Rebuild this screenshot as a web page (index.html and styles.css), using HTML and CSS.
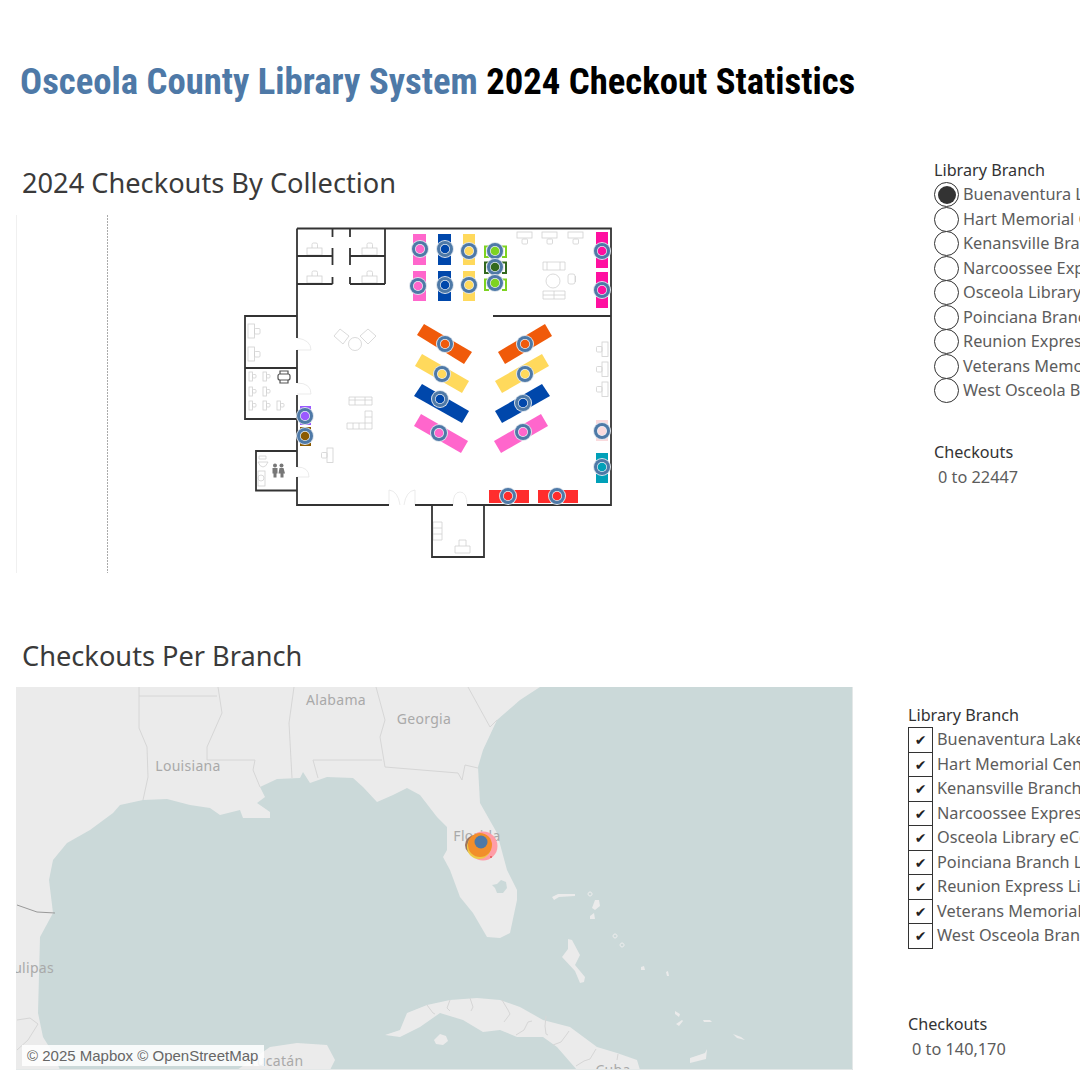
FILE: index.html
```html
<!DOCTYPE html>
<html lang="en">
<head>
  <meta charset="UTF-8" />
  <meta name="viewport" content="width=device-width, initial-scale=1.0"/>
  <title>Osceola County Library System – 2024 Checkout Statistics</title>
  <link rel="stylesheet" href="styles.css">
</head>
<body>
<h1 class="title"><span class="title-blue">Osceola County Library System</span> 2024 Checkout Statistics</h1>

<section class="row row-plan">
  <div class="main">
    <h2>2024 Checkouts By Collection</h2>
    <svg class="plan" viewBox="16 215 824 358" width="824" height="358">
      <defs>
        <g id="marker">
          <circle r="9" fill="#dde4ec"/>
          <circle r="8" fill="#4e79a7"/>
          <circle r="5" fill="#e8eef4"/>
          <circle r="4.300" fill="currentColor"/>
        </g>
        <g id="desk-up" class="furn">
          <rect x="0" y="5" width="15" height="7"/>
          <path d="M5 5V1.5Q5 0 6.5 0H9Q10.5 0 10.5 1.5V5"/>
        </g>
        <g id="desk-down" class="furn">
          <rect x="0" y="0" width="15" height="6"/>
          <rect x="5" y="7" width="5.5" height="5" rx="1"/>
        </g>
        <g id="desk-left" class="furn">
          <rect x="6" y="0" width="6" height="14.5"/>
          <rect x="0.5" y="4.5" width="5.5" height="5.5" rx="1"/>
        </g>
        <g id="desk-right" class="furn">
          <rect x="0" y="0" width="6.5" height="14"/>
          <rect x="6.5" y="4.5" width="5.5" height="5.5" rx="1"/>
        </g>
        <g id="desk-small" class="furn">
          <rect x="0" y="0" width="3.5" height="9"/>
          <rect x="3.5" y="2.5" width="3.5" height="3.5" rx="1"/>
        </g>
      </defs>

      <path class="dash" d="M107.5 215V573"/>
      <path class="frame" d="M16.5 215V573.5H840"/>

      <g class="furn">
        <path d="M543 262h22v8h-22zM547 262v8M560 262v8"/>
        <circle cx="553" cy="281" r="7"/>
        <path d="M543 291h22v8h-22zM554 291v8M543 295h22"/>
        <rect x="568" y="274" width="7" height="10" rx="2"/>
        <path d="M575.5 276v6"/>
        <path d="M334 336l6-7 9 7-6 8zM360 336l8-7 8 7-8 8z"/>
        <circle cx="355" cy="344" r="6.5"/>
        <path d="M349 397h23v8h-23zM355 397v8M365 397v8M349 400h23"/>
        <path d="M365 411h7v18h-25v-6h18zM365 417h7M365 423h7M353 423v6M359 423v6M365 423v6"/>
        <path d="M433 522h9v18h-9zM433 528h9M433 534h9"/>
        <path d="M455 546h15v7h-15zM459 546v-6h7v6"/>
        <path d="M259 459h7v-3h-7zM258 462q2 5 5 5t5-5z"/>
        <rect x="258" y="471" width="7" height="15"/>
        <circle cx="261" cy="478" r="3"/>
      </g>
      <path class="door" d="M297 338q14 2 14 12h-14M297 383q14 0 14 11h-14M297 467q12 0 12 10h-12M389 505v-15q9 1 11 15M415 505v-15q-9 1-11 15M453 505q0-13 7-13t7 13"/>
      <use href="#desk-up" x="307" y="243"/>
      <use href="#desk-up" x="362" y="243"/>
      <use href="#desk-up" x="307" y="271"/>
      <use href="#desk-up" x="362" y="271"/>
      <use href="#desk-down" x="517" y="232"/>
      <use href="#desk-down" x="542" y="232"/>
      <use href="#desk-down" x="568" y="232"/>
      <use href="#desk-left" x="596" y="342"/>
      <use href="#desk-left" x="596" y="362"/>
      <use href="#desk-left" x="596" y="382"/>
      <use href="#desk-left" x="321" y="448"/>
      <use href="#desk-right" x="248" y="324"/>
      <use href="#desk-right" x="248" y="347"/>
      <use href="#desk-small" x="249" y="372"/>
      <use href="#desk-small" x="263" y="372"/>
      <use href="#desk-small" x="249" y="387"/>
      <use href="#desk-small" x="263" y="387"/>
      <use href="#desk-small" x="249" y="401"/>
      <use href="#desk-small" x="263" y="401"/>
      <use href="#desk-small" x="277" y="401"/>

      <g class="printer">
        <rect x="278" y="374" width="12" height="6" rx="2"/>
        <path d="M280 374v-3h8v3M280 380v3h8v-3"/>
      </g>
      <g class="people">
        <circle cx="275" cy="465.500" r="2"/>
        <path d="M272.500 468h5v5.500h-1v4h-3v-4h-1z"/>
        <circle cx="281.500" cy="465.500" r="2"/>
        <path d="M279.500 468h4l1.500 5.500h-1.500v4h-3v-4h-2z"/>
      </g>

      <path class="wall" d="M297 228.500H611V505H467M453 505H415M389 505H297V477M297 467V395M297 383V350M297 338V228.500
        M332.500 228.500V237M332.500 248V265M332.500 277V284M350 228.500V237M350 248V265M350 277V284
        M385 228.500V284M297 256H332.500M350 256H385M297 284H332.500M350 284H385
        M297 316H245V419H297M245 368H297
        M297 451H256V490.500H297
        M493 316H611
        M432 505V557H484V505"/>

      <g class="pink"><rect class="shelf" x="413" y="234" width="13" height="31"/><rect class="shelf" x="413" y="271" width="13" height="30"/></g>
      <g class="blue"><rect class="shelf" x="438" y="234" width="13" height="31"/><rect class="shelf" x="438" y="271" width="13" height="30"/></g>
      <g class="yellow"><rect class="shelf" x="463" y="234" width="12" height="31"/><rect class="shelf" x="463" y="271" width="12" height="30"/></g>
      <path class="green-bracket" d="M489 246.500h-4v10.500h4M502 246.500h4v10.500h-4M489 279.500h-4v10.500h4M502 279.500h4v10.500h-4"/>
      <path class="dkgreen-bracket" d="M489 262.500h-4v10.500h4M502 262.500h4v10.500h-4"/>
      <g class="magenta"><rect class="shelf" x="596" y="232" width="12" height="36"/><rect class="shelf" x="596" y="272" width="12" height="36"/></g>

      <polygon class="shelf orange" points="424,324 472,352 464,364 417,335"/>
      <polygon class="shelf yellow" points="422,354 469,381 462,393 415,366"/>
      <polygon class="shelf blue" points="422,384 469,411 462,423 414,396"/>
      <polygon class="shelf pink" points="421,414 468,441 461,453 414,426"/>
      <polygon class="shelf orange" points="545,324 552,336 505,364 498,352"/>
      <polygon class="shelf yellow" points="542,354 549,366 502,393 495,381"/>
      <polygon class="shelf blue" points="542,384 550,396 502,423 495,411"/>
      <polygon class="shelf pink" points="541,414 548,426 501,453 494,441"/>

      <rect class="shelf pale" x="596" y="420" width="12" height="21"/>
      <rect class="shelf teal" x="596" y="453" width="12" height="30"/>
      <rect class="shelf red" x="489" y="490" width="40" height="13"/>
      <rect class="shelf red" x="538" y="490" width="40" height="13"/>
      <rect class="shelf purple" x="300" y="406" width="11" height="19"/>
      <rect class="shelf brown" x="300" y="427" width="11" height="19"/>

      <use class="pink" href="#marker" x="420" y="249"/>
      <use class="pink" href="#marker" x="418" y="286"/>
      <use class="blue" href="#marker" x="445" y="249"/>
      <use class="blue" href="#marker" x="445" y="285"/>
      <use class="yellow" href="#marker" x="469" y="251"/>
      <use class="yellow" href="#marker" x="469" y="285"/>
      <use class="green" href="#marker" x="495" y="251"/>
      <use class="dkgreen" href="#marker" x="495" y="267"/>
      <use class="green" href="#marker" x="495" y="283"/>
      <use class="magenta" href="#marker" x="602" y="251"/>
      <use class="magenta" href="#marker" x="602" y="290"/>
      <use class="orange" href="#marker" x="445" y="344"/>
      <use class="orange" href="#marker" x="525" y="344"/>
      <use class="yellow" href="#marker" x="442" y="374"/>
      <use class="yellow" href="#marker" x="525" y="374"/>
      <use class="blue" href="#marker" x="440" y="399"/>
      <use class="blue" href="#marker" x="523" y="403"/>
      <use class="pink" href="#marker" x="439" y="433"/>
      <use class="pink" href="#marker" x="523" y="432"/>
      <use class="pale" href="#marker" x="602" y="431"/>
      <use class="teal" href="#marker" x="602" y="467"/>
      <use class="red" href="#marker" x="508" y="496"/>
      <use class="red" href="#marker" x="557" y="496"/>
      <use class="purple" href="#marker" x="305" y="416"/>
      <use class="brown" href="#marker" x="305" y="436"/>
    </svg>
  </div>
  <aside class="side">
    <div class="legend-title">Library Branch</div>
    <ul class="radios">
      <li class="checked">Buenaventura Lakes Branch Library</li>
      <li>Hart Memorial Central Library</li>
      <li>Kenansville Branch Library</li>
      <li>Narcoossee Express Library</li>
      <li>Osceola Library eCollection</li>
      <li>Poinciana Branch Library</li>
      <li>Reunion Express Library</li>
      <li>Veterans Memorial Library</li>
      <li>West Osceola Branch Library</li>
    </ul>
    <div class="legend-title legend-gap">Checkouts</div>
    <div class="range">0 to 22447</div>
  </aside>
</section>

<section class="row row-map">
  <div class="main">
    <h2>Checkouts Per Branch</h2>
    <div class="map">
      <svg viewBox="16 687 837 383" width="837" height="383">
        <rect class="water" x="16" y="687" width="837" height="383"/>
        <path class="land" d="M16 687H540L520 700 497 720 483 750 478 767 480 803 497 833 507 870 517 890 517 900 510 933 500 938 487 937 473 913 460 897 450 870 443 857 447 850 447 827 437 817 420 795 407 788 393 795 377 802 363 787 353 778 327 777 310 783 303 772 300 778 277 779 260 787 265 797 257 803 270 812 270 818 243 818 240 810 220 815 210 808 190 805 167 799 143 800 120 805 113 813 90 830 67 843 53 860 49 880 53 913 40 937 38 1013 43 1037 53 1053 60 1070H16Z"/>
        <path class="water" d="M501 880l5 2 1 6-4 5-6 0-2-5-3-3 5-1z"/>
        <path class="land" d="M237 1070L270 1047 297 1043 327 1045 335 1060 330 1070Z"/>
        <path class="land" d="M385 1035L400 1030 407 1013 427 1005 450 1000 477 998 500 1000 520 1007 543 1020 570 1027 597 1047 617 1053 637 1060 640 1070H577L557 1047 543 1037 517 1037 500 1030 483 1032 463 1020 440 1013 420 1027 400 1037Z"/>
        <path class="land" d="M440 1034l6 2 2 5-5 4-7-1-2-4z"/>
        <path class="land" d="M568 939l4 1 8 15-5 10 10 12-1 5-4 1-5-12-13-14 6-8zM552 897l6-3 17 0 0 2-16 1-5 3zM592 908l3-8 4 0 1 6-5 4zM590 916l4-3 1 6-5 0zM641 967l3-1 1 4-4 0zM666 972l2-1 1 5-2 0zM675 1011l5 3-1 3-4-3zM676 1024l6-4 1 1-4 5zM703 1020l7 0 2 2-8 0zM733 1034l8 3 4 3-8-2zM690 1058l15-5 2-4-1 10-16 4z"/>
        <path class="isle" d="M615 934a2 2 0 1 0 .1 0zM622 943a2 2 0 1 0 .1 0zM590 892a2 2 0 1 0 .1 0z"/>

        <path class="border" d="M139 687V728L147 747 148 777 143 800M139 696H217M218 687L222 713 207 747 207 760H255L253 770 260 787M294 687L289 723 292 778M376 687L385 720 380 737 385 767 458 773 462 780 465 765 478 768M313 760H382M313 760L318 778M468 687L490 727 497 720"/>
        <path class="border" d="M427 1005l6 8 2 1M450 1000l-3 8 3 3M470 998l3 9-2 4M502 1000l6 10 2 4-6 8M516 1035l8-5 4-8 4-1M546 1016l-1 10 1 8 2 1M553 1045l8-3 6-8 2-3M576 1066l8-5 6-2 6-10M617 1060l1-6"/>
        <path class="border-strong" d="M17 905L37 912 55 913"/>
        <path class="border" d="M17 1020L30 1018 38 1024 28 1040 17 1050"/>

        <text class="map-label" x="336" y="705" text-anchor="middle">Alabama</text>
        <text class="map-label" x="424" y="724" text-anchor="middle">Georgia</text>
        <text class="map-label" x="188" y="771" text-anchor="middle">Louisiana</text>
        <text class="map-label" x="477" y="841" text-anchor="middle">Florida</text>
        <text class="map-label" x="54" y="973" text-anchor="end">Tamaulipas</text>
        <text class="map-label" x="249" y="1066">Yucatán</text>
        <text class="map-label" x="613" y="1075" text-anchor="middle">Cuba</text>

        <circle cx="483" cy="846" r="14.500" fill="#ff9da7"/>
        <circle cx="475" cy="845" r="10" fill="#9c755f"/>
        <circle cx="479" cy="847" r="12" fill="#edc948"/>
        <circle cx="480" cy="845" r="12" fill="#f28e2b"/>
        <circle cx="481" cy="842" r="6.500" fill="#4e79a7"/>
        <circle cx="491" cy="857" r="1" fill="#e15759"/>
        <path class="map-edge" d="M852.5 687V1069.500H16"/>
      </svg>
      <div class="attribution">© 2025 Mapbox © OpenStreetMap</div>
    </div>
  </div>
  <aside class="side">
    <div class="legend-title">Library Branch</div>
    <ul class="checks">
      <li>Buenaventura Lakes Branch Library</li>
      <li>Hart Memorial Central Library</li>
      <li>Kenansville Branch Library</li>
      <li>Narcoossee Express Library</li>
      <li>Osceola Library eCollection</li>
      <li>Poinciana Branch Library</li>
      <li>Reunion Express Library</li>
      <li>Veterans Memorial Library</li>
      <li>West Osceola Branch Library</li>
    </ul>
    <div class="legend-title legend-gap-map">Checkouts</div>
    <div class="range">0 to 140,170</div>
  </aside>
</section>
</body>
</html>
```

FILE: styles.css
```css
html, body {
  margin: 0;
  height: 1080px;
  overflow: hidden;
}

body {
  width: 1080px;
  background: #fff;
  font-family: "Noto Sans", "Open Sans", sans-serif;
  color: #333;
}

.title {
  margin: 0;
  padding: 60px 0 0 20px;
  font-family: Roboto, sans-serif;
  font-stretch: condensed;
  font-size: 36.700px;
  line-height: 44px;
  font-weight: 700;
  color: #000;
  white-space: nowrap;
}

.title-blue {
  color: #4e79a7;
}

.row {
  display: flex;
  padding-left: 16px;
  overflow: hidden;
}

.row-plan {
  margin-top: 55px;
  height: 417px;
}

.row-map {
  height: 504px;
  box-sizing: border-box;
  padding-top: 56px;
}

.row-plan .side {
  margin-left: 94px;
}

.row-map .side {
  margin-left: 55px;
  padding-top: 72px;
}

.main {
  flex: none;
}

h2 {
  margin: 5px 0 12px 6px;
  font-size: 27.200px;
  line-height: 38px;
  height: 39px;
  font-weight: 400;
  color: #3a3a3a;
  white-space: nowrap;
}

.row-map h2 {
  margin-bottom: 11px;
}

.plan,
.map svg {
  display: block;
}

.map {
  position: relative;
  height: 383px;
}

.attribution {
  position: absolute;
  left: 6px;
  bottom: 4px;
  padding: 0 6px 0 5px;
  height: 21px;
  line-height: 21px;
  background: rgba(255, 255, 255, 0.85);
  font-family: "Liberation Sans", Arial, sans-serif;
  font-size: 15px;
  color: #666;
  white-space: nowrap;
}

/* sidebar legends */
.side {
  flex: none;
  width: 400px;
  white-space: nowrap;
  font-size: 16.300px;
  color: #5c5c5c;
}

.legend-title {
  font-size: 16.200px;
  line-height: 22px;
  color: #333;
}

.legend-gap {
  margin-top: 38.500px;
}

.legend-gap-map {
  margin-top: 65.500px;
}

.range {
  padding-left: 4px;
  line-height: 24px;
  margin-top: 2px;
}

.radios,
.checks {
  list-style: none;
  margin: 1px 0 0;
  padding: 0;
}

.radios li,
.checks li {
  position: relative;
  height: 24.500px;
  line-height: 24.500px;
  padding-left: 29px;
}

.radios li::before {
  content: "";
  position: absolute;
  left: 0;
  top: 0;
  width: 23px;
  height: 23px;
  border: 1.500px solid #333;
  border-radius: 50%;
  background: #fff;
}

.radios li.checked::after {
  content: "";
  position: absolute;
  left: 4px;
  top: 4px;
  width: 18px;
  height: 18px;
  border-radius: 50%;
  background: #333;
}

.checks li::before {
  content: "✔";
  position: absolute;
  left: 0;
  top: 0;
  width: 23px;
  height: 24px;
  border: 1px solid #333;
  text-align: center;
  font-family: "DejaVu Sans", sans-serif;
  font-size: 14px;
  line-height: 24px;
  color: #222;
  background: #fff;
}

/* floor plan */
.dash {
  fill: none;
  stroke: #aaa;
  stroke-dasharray: 2 1;
}

.frame {
  fill: none;
  stroke: #f0f0f0;
}

.wall {
  fill: none;
  stroke: #333;
  stroke-width: 1.800;
}

.furn,
.furn rect,
.furn path,
.furn circle {
  fill: none;
  stroke: #d0d0d0;
  stroke-width: 0.800;
}

.door {
  fill: #fff;
  stroke: #e6e6e6;
  stroke-width: 0.800;
}

.printer rect,
.printer path {
  fill: none;
  stroke: #555;
  stroke-width: 1.200;
}

.people {
  fill: #777;
}

.shelf {
  fill: currentColor;
}

.green-bracket {
  fill: none;
  stroke: #7ed321;
  stroke-width: 2;
}

.dkgreen-bracket {
  fill: none;
  stroke: #33691e;
  stroke-width: 2;
}

.pink { color: #ff66cc; }
.blue { color: #0047ab; }
.yellow { color: #ffd95c; }
.orange { color: #f05a0a; }
.magenta { color: #ff0fa0; }
.green { color: #7ed321; }
.dkgreen { color: #33691e; }
.red { color: #ff2d2d; }
.teal { color: #00a0b8; }
.purple { color: #9b59ff; }
.brown { color: #8b5a00; }
.pale { color: #fadadd; }

/* map */
.water {
  fill: #cbd9d9;
}

.land {
  fill: #ebebeb;
}

.isle {
  fill: none;
  stroke: #eee;
}

.border {
  fill: none;
  stroke: #d6d6d6;
  stroke-width: 1;
}

.border-strong {
  fill: none;
  stroke: #999;
  stroke-width: 1;
}

.map-edge {
  fill: none;
  stroke: #e4e8e8;
}

.map-label {
  font-family: "Noto Sans", sans-serif;
  font-size: 14px;
  letter-spacing: 0.3px;
  fill: #a9a9a9;
}
```
